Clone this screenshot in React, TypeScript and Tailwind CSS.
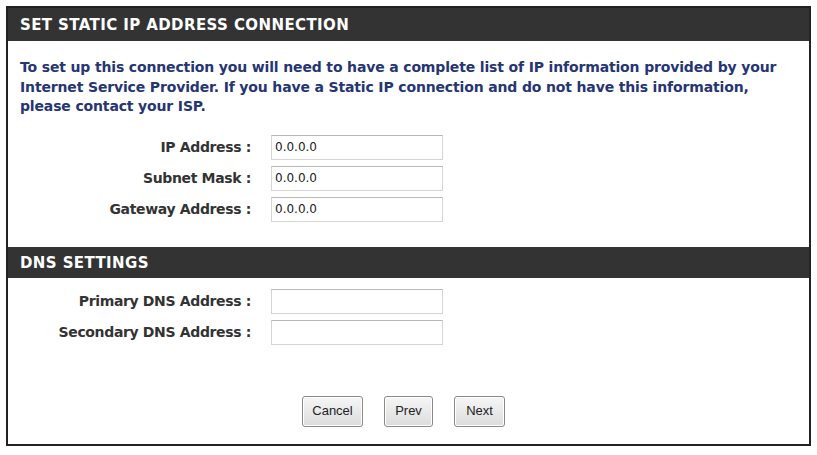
const font = { fontFamily: '"DejaVu Sans", Verdana, sans-serif' }

function Row({ label, value }: { label: string; value?: string }) {
  return (
    <div className="flex items-center h-[31px]">
      <div className="w-[251px] pr-[8px] text-right text-[14px] font-bold text-[#333] tracking-[-0.35px]">{label}</div>
      <div className="ml-[12px] w-[172px] h-[25px] border border-[#d4d4d4] border-t-[#b8b8b8] bg-white flex items-center px-[3px] text-[12px] text-[#222]">
        {value}
      </div>
    </div>
  )
}

function Btn({ label, w }: { label: string; w: string }) {
  return (
    <button
      className={`${w} h-[31px] rounded-[3px] border border-[#8a8a8a] bg-gradient-to-b from-[#f6f6f6] to-[#dcdcdc] text-[13px] text-[#222] shadow-[inset_0_0_0_1px_#fff]`}
      style={{ fontFamily: '"Liberation Sans", Arial, sans-serif' }}
    >
      {label}
    </button>
  )
}

export default function App() {
  return (
    <div className="w-[817px] h-[455px] bg-white pt-[6px] pl-[6px]" style={font}>
      <div className="w-[805px] h-[440px] border-2 border-[#222] flex flex-col">
        <div className="h-[33px] bg-[#333] flex items-center px-[12px] pt-[2px] text-white font-bold text-[15px] tracking-[0.4px]">
          SET STATIC IP ADDRESS CONNECTION
        </div>
        <p className="px-[12px] pt-[17px] text-[14px] leading-[19.5px] font-bold text-[#263573] tracking-[-0.15px]">
          To set up this connection you will need to have a complete list of IP information provided by your Internet Service Provider. If you have a Static IP connection and do not have this information, please contact your ISP.
        </p>
        <div className="pt-[15px] flex flex-col">
          <Row label="IP Address :" value="0.0.0.0" />
          <Row label="Subnet Mask :" value="0.0.0.0" />
          <Row label="Gateway Address :" value="0.0.0.0" />
        </div>
        <div className="mt-[22px] h-[31px] bg-[#333] flex items-center px-[12px] pt-[2px] text-white font-bold text-[15px] tracking-[0.4px]">
          DNS SETTINGS
        </div>
        <div className="pt-[8px] flex flex-col">
          <Row label="Primary DNS Address :" />
          <Row label="Secondary DNS Address :" />
        </div>
        <div className="mt-[48px] flex justify-center gap-[21px] pr-[10px]">
          <Btn label="Cancel" w="w-[61px]" />
          <Btn label="Prev" w="w-[49px]" />
          <Btn label="Next" w="w-[51px]" />
        </div>
      </div>
    </div>
  )
}
